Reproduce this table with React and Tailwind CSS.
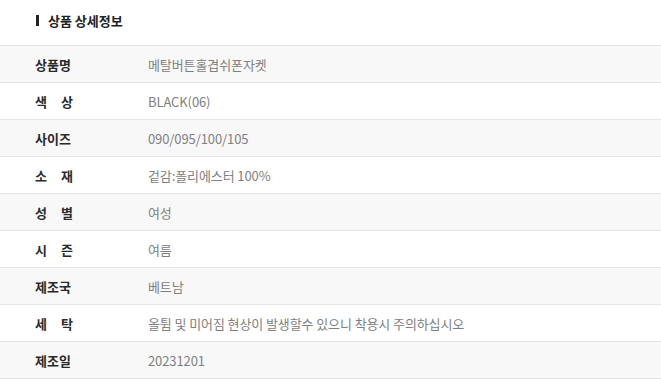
const rows = [
  { label: ["상품명"], value: "메탈버튼홀겹쉬폰자켓" },
  { label: ["색", "상"], value: "BLACK(06)" },
  { label: ["사이즈"], value: "090/095/100/105" },
  { label: ["소", "재"], value: "겉감:폴리에스터 100%" },
  { label: ["성", "별"], value: "여성" },
  { label: ["시", "즌"], value: "여름" },
  { label: ["제조국"], value: "베트남" },
  { label: ["세", "탁"], value: "올튐 및 미어짐 현상이 발생할수 있으니 착용시 주의하십시오" },
  { label: ["제조일"], value: "20231201" },
]

export default function App() {
  return (
    <div
      className="w-[661px] h-[382px] bg-white overflow-hidden"
      style={{ fontFamily: '"Noto Sans CJK KR", "Noto Sans", sans-serif' }}
    >
      <div className="h-[45px] flex items-center pl-[36px] pb-[4px]">
        <span className="w-[3px] h-[11px] bg-[#222] mr-[9px]"></span>
        <h2 className="text-[13px] font-bold text-[#222] leading-none">상품 상세정보</h2>
      </div>

      <div className="border-b border-[#e6e6e6]">
        {rows.map((row, i) => (
          <div
            key={i}
            className={`h-[37px] flex items-center pt-[2px] border-t border-[#e6e6e6] ${i % 2 === 0 ? "bg-[#f8f8f8]" : "bg-white"}`}
          >
            <div className="w-[148px] pl-[35px] flex gap-[14px] text-[13px] font-bold text-[#2a2a2a]">
              {row.label.map((t, j) => (
                <span key={j}>{t}</span>
              ))}
            </div>
            <div className="text-[13px] text-[#808080] tracking-[-0.1px]">{row.value}</div>
          </div>
        ))}
      </div>
    </div>
  )
}
